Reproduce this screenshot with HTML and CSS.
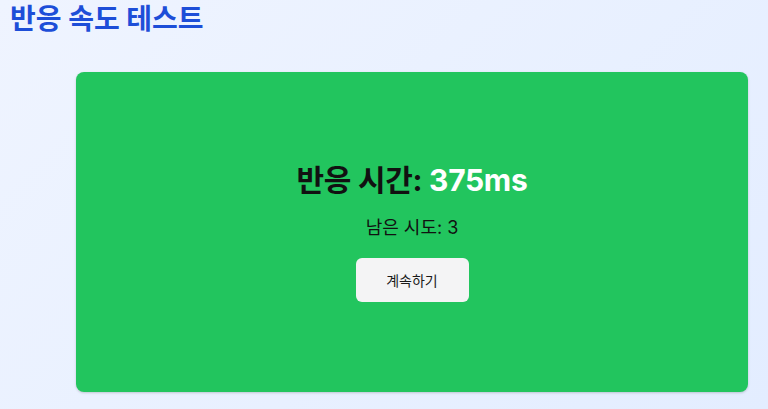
FILE: index.html
```html
<!DOCTYPE html>
<html lang="ko">
<head>
<meta charset="utf-8">
<title>반응 속도 테스트</title>
<link rel="stylesheet" href="styles.css">
</head>
<body>
<div class="page">
  <h1 class="title">반응 속도 테스트</h1>
  <div class="card-wrap">
    <div class="card">
      <h2 class="result">반응 시간: <span class="ms">375ms</span></h2>
      <p class="tries">남은 시도: 3</p>
      <button class="btn">계속하기</button>
    </div>
  </div>
</div>
</body>
</html>
```
FILE: styles.css
```css
html, body {
  margin: 0;
  padding: 0;
  height: 100%;
}
body {
  font-family: Inter, "Noto Sans CJK KR", sans-serif;
  background: linear-gradient(135deg, #eff4ff 0%, #e3edff 100%);
  overflow: hidden;
}
.page {
  padding: 0 8px 0 10px;
}
.title {
  margin: 0;
  font-size: 28px;
  line-height: 38px;
  font-weight: 700;
  color: #1d4ed8;
}
.card-wrap {
  padding-top: 34px;
  padding-left: 66px;
}
.card {
  width: 672px;
  height: 320px;
  box-sizing: border-box;
  background: #22c55e;
  border-radius: 8px;
  box-shadow: 0 1px 3px rgba(0,0,0,0.12), 0 1px 2px rgba(0,0,0,0.06);
  display: flex;
  flex-direction: column;
  align-items: center;
  justify-content: center;
}
.result {
  margin: 0;
  font-size: 30px;
  line-height: 36px;
  font-weight: 700;
  color: #111;
  letter-spacing: -0.3px;
}
.ms {
  color: #ffffff;
}
.tries {
  margin: 16px 0 0;
  font-size: 18px;
  line-height: 28px;
  color: #111;
}
.btn {
  margin-top: 16px;
  width: 113px;
  height: 44px;
  border: none;
  border-radius: 6px;
  background: #f4f4f5;
  font-family: Inter, "Noto Sans CJK KR", sans-serif;
  font-size: 14px;
  font-weight: 400;
  color: #1a1a1a;
}
```
